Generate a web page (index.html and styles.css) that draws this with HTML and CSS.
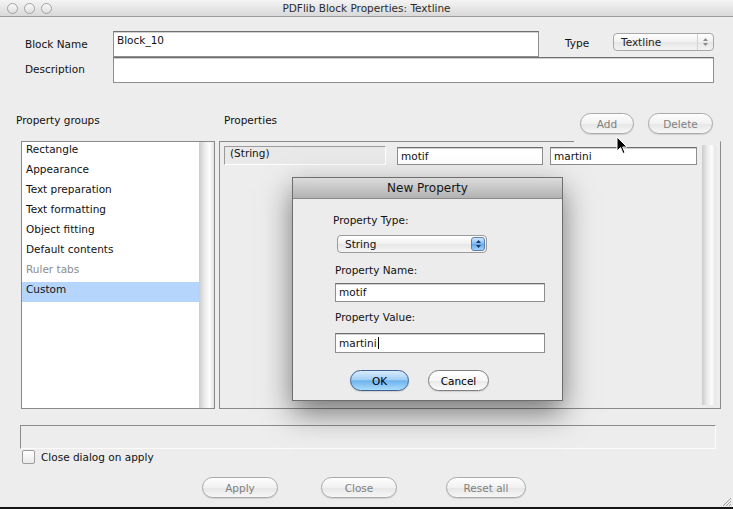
FILE: index.html
```html
<!DOCTYPE html>
<html lang="en">
<head>
  <meta charset="UTF-8">
  <title>PDFlib Block Properties: Textline</title>
  <link rel="stylesheet" href="styles.css">
</head>
<body>
  <div class="window">
    <div class="titlebar">
      <div class="lights">
        <span class="light"></span>
        <span class="light"></span>
        <span class="light"></span>
      </div>
      <div class="title">PDFlib Block Properties: Textline</div>
    </div>

    <div class="form">
      <div class="form-row">
        <label class="form-label">Block Name</label>
        <div class="field field-name">Block_10</div>
        <label class="form-label type-label">Type</label>
        <div class="popup">
          <span>Textline</span>
          <span class="popup-arrows">
            <svg width="7" height="10" viewBox="0 0 7 10"><path d="M3.5 1 L6 4 H1 Z M3.5 9 L6 6 H1 Z" fill="#8a8a8a"/></svg>
          </span>
        </div>
      </div>
      <div class="form-row">
        <label class="form-label desc-label">Description</label>
        <div class="field field-desc"></div>
      </div>
    </div>

    <div class="main">
      <div class="groups">
        <div class="section-label">Property groups</div>
        <div class="list">
          <div class="list-items">
            <div class="list-item">Rectangle</div>
            <div class="list-item">Appearance</div>
            <div class="list-item">Text preparation</div>
            <div class="list-item">Text formatting</div>
            <div class="list-item">Object fitting</div>
            <div class="list-item">Default contents</div>
            <div class="list-item disabled">Ruler tabs</div>
            <div class="list-item selected">Custom</div>
          </div>
          <div class="vscroll"></div>
        </div>
      </div>

      <div class="properties">
        <div class="props-header">
          <div class="section-label">Properties</div>
          <div class="props-buttons">
            <button class="pill add-button">Add</button>
            <button class="pill delete-button">Delete</button>
          </div>
        </div>
        <div class="props-panel">
          <div class="props-rows">
            <div class="prop-row">
              <div class="prop-type">(String)</div>
              <div class="field prop-name">motif</div>
              <div class="field prop-value">martini</div>
            </div>
          </div>
          <div class="vscroll props-scroll"></div>
        </div>
      </div>
    </div>

    <div class="status"></div>

    <div class="check-row">
      <span class="checkbox"></span>
      <span>Close dialog on apply</span>
    </div>

    <div class="footer">
      <button class="pill apply-button">Apply</button>
      <button class="pill close-button">Close</button>
      <button class="pill reset-button">Reset all</button>
    </div>

    <div class="dialog">
      <div class="dialog-title">New Property</div>
      <div class="dialog-body">
        <div class="dialog-label">Property Type:</div>
        <div class="dialog-popup">
          <span>String</span>
          <span class="blue-arrows">
            <svg width="7" height="10" viewBox="0 0 7 10"><path d="M3.5 1 L6 4 H1 Z M3.5 9 L6 6 H1 Z" fill="#1d3b66"/></svg>
          </span>
        </div>
        <div class="dialog-label name-label">Property Name:</div>
        <div class="field dialog-field name-field">motif</div>
        <div class="dialog-label value-label">Property Value:</div>
        <div class="field dialog-field value-field">martini<span class="caret"></span></div>
        <div class="dialog-buttons">
          <button class="pill ok-button">OK</button>
          <button class="pill cancel-button">Cancel</button>
        </div>
      </div>
    </div>

    <svg class="cursor" width="12" height="19" viewBox="0 0 12 19">
      <path d="M1 1 L1 15 L4.5 11.5 L7 17.5 L9 16.6 L6.6 11 L11 11 Z" fill="#000" stroke="#fff" stroke-width="1"/>
    </svg>

    <svg class="grip" width="9" height="9" viewBox="0 0 9 9">
      <path d="M1 9 L9 1 M4 9 L9 4 M7 9 L9 7" stroke="#a0a0a0" stroke-width="1"/>
    </svg>
  </div>
</body>
</html>
```

FILE: styles.css
```css
* {
  box-sizing: border-box;
}

body {
  margin: 0;
  background-color: #161616;
  font-family: "DejaVu Sans", Verdana, sans-serif;
  font-size: 10.5px;
  color: #111;
}

.window {
  position: relative;
  width: 733px;
  height: 507px;
  background-color: #ededed;
  overflow: hidden;
}

.titlebar {
  display: grid;
  grid-template-columns: 1fr auto 1fr;
  align-items: center;
  height: 17px;
  background: linear-gradient(#f4f4f4, #d9d9d9);
  border-bottom: 1px solid #9c9c9c;
}

.lights {
  display: flex;
  gap: 6px;
  padding-left: 7px;
}

.light {
  width: 11px;
  height: 11px;
  border-radius: 50%;
  border: 1px solid #a2a2a2;
  background: linear-gradient(#fafafa, #dedede);
}

.title {
  font-size: 10.5px;
  color: #2b2b2b;
}

.form {
  padding: 14px 0 0 25px;
}

.form-row {
  display: flex;
  align-items: center;
}

.form-label {
  width: 88px;
}

.desc-label {
  padding-bottom: 3px;
}

.field {
  background-color: #fff;
  border: 1px solid #8e8e8e;
  border-top-color: #6f6f6f;
  box-shadow: inset 0 1px 0 #d0d0d0;
  padding: 1px 3px;
  line-height: 14px;
}

.field-name {
  width: 426px;
  height: 26px;
}

.field-desc {
  width: 601px;
  height: 26px;
}

.type-label {
  width: 48px;
  margin-left: 26px;
  padding-bottom: 2px;
}

.popup {
  display: flex;
  justify-content: space-between;
  align-items: center;
  align-self: flex-start;
  width: 101px;
  height: 18px;
  margin-top: 2px;
  padding-left: 7px;
  border: 1px solid #a7a7a7;
  border-radius: 4px;
  background: linear-gradient(#ffffff, #f0f0f0 50%, #e6e6e6 51%, #f3f3f3);
  color: #222;
}

.popup-arrows {
  display: flex;
  align-items: center;
  justify-content: center;
  width: 16px;
  height: 100%;
  border-left: 1px solid #d0d0d0;
}

.main {
  display: flex;
  gap: 4px;
  margin-top: 30px;
  padding-left: 16px;
}

.groups {
  width: 199px;
}

.section-label {
  line-height: 14px;
  height: 28px;
}

.list {
  display: flex;
  width: 194px;
  height: 268px;
  margin-left: 5px;
  border: 1px solid #8a8a8a;
}

.list-items {
  flex: 1;
  background-color: #fff;
}

.list-item {
  height: 20px;
  line-height: 14px;
  padding-left: 4px;
}

.list-item.disabled {
  color: #8c8c8c;
}

.list-item.selected {
  background-color: #b6d5fd;
}

.vscroll {
  width: 15px;
  background: linear-gradient(to right, #cbcbcb, #e9e9e9 35%, #fdfdfd 70%, #e2e2e2);
}

.properties {
  width: 502px;
}

.props-header {
  display: flex;
  justify-content: space-between;
  align-items: flex-start;
  height: 28px;
  padding: 0 8px 0 5px;
}

.props-buttons {
  display: flex;
  gap: 14px;
}

.pill {
  height: 21px;
  padding: 0;
  border: 1px solid #a9a9a9;
  border-radius: 11px;
  background: linear-gradient(#fefefe, #f1f1f1 50%, #e7e7e7 55%, #f6f6f6);
  box-shadow: 0 1px 1px rgba(0, 0, 0, 0.12);
  font-family: inherit;
  font-size: 10.5px;
  color: #808080;
}

.add-button {
  width: 54px;
}

.delete-button {
  width: 65px;
}

.props-panel {
  position: relative;
  display: flex;
  height: 268px;
  border: 1px solid #8a8a8a;
  border-top-color: transparent;
  padding: 3px 4px 3px 4px;
}

.props-panel::before {
  content: "";
  position: absolute;
  top: -1px;
  left: -1px;
  width: 355px;
  border-top: 1px solid #8a8a8a;
}

.props-rows {
  flex: 1;
}

.prop-row {
  display: flex;
  margin-top: 1px;
}

.prop-type {
  width: 162px;
  height: 19px;
  padding: 0 5px;
  line-height: 12px;
  background-color: #e9e9e9;
  border: 1px solid #9a9a9a;
  border-right-color: #fff;
  border-bottom-color: #fff;
}

.prop-name {
  width: 146px;
  height: 18px;
  margin-left: 11px;
  margin-top: 1px;
}

.prop-value {
  width: 147px;
  height: 18px;
  margin-left: 7px;
  margin-top: 1px;
}

.props-scroll {
  margin-left: 5px;
}

.status {
  width: 696px;
  height: 24px;
  margin: 16px 0 0 20px;
  border: 1px solid #8c8c8c;
  border-right-color: #fbfbfb;
  border-bottom-color: #fbfbfb;
}

.check-row {
  display: flex;
  align-items: center;
  gap: 6px;
  margin: 1px 0 0 22px;
  height: 14px;
}

.checkbox {
  width: 13px;
  height: 14px;
  border: 1px solid #9d9d9d;
  border-radius: 2px;
  background: linear-gradient(#ffffff, #e9e9e9);
}

.footer {
  display: flex;
  margin-top: 13px;
  padding-left: 202px;
}

.apply-button {
  width: 76px;
}

.close-button {
  width: 76px;
  margin-left: 43px;
}

.reset-button {
  width: 80px;
  margin-left: 49px;
}

.dialog {
  position: absolute;
  left: 292px;
  top: 177px;
  width: 271px;
  height: 224px;
  background-color: #ececec;
  border: 1px solid #6e6e6e;
  box-shadow: 0 12px 28px rgba(0, 0, 0, 0.5);
}

.dialog-title {
  height: 21px;
  line-height: 21px;
  text-align: center;
  font-size: 12px;
  color: #161616;
  background: linear-gradient(#dcdcdc, #b2b2b2);
  border-bottom: 1px solid #8a8a8a;
}

.dialog-body {
  display: flex;
  flex-direction: column;
  align-items: flex-start;
  padding: 14px 0 0 40px;
}

.dialog-label {
  line-height: 14px;
}

.dialog-popup {
  display: flex;
  justify-content: space-between;
  align-items: center;
  width: 150px;
  height: 18px;
  margin: 8px 0 0 4px;
  padding: 0 1px 0 7px;
  border: 1px solid #9a9a9a;
  border-radius: 4px;
  background: linear-gradient(#ffffff, #f0f0f0 50%, #e6e6e6 51%, #f5f5f5);
}

.blue-arrows {
  display: flex;
  align-items: center;
  justify-content: center;
  width: 14px;
  height: 14px;
  border-radius: 3px;
  background: linear-gradient(#cfe6fb, #7fbaf0 50%, #5ea7ec 51%, #a6d4f8);
  border: 1px solid #5a7fb0;
}

.name-label {
  margin: 10px 0 0 2px;
}

.dialog-field {
  width: 210px;
  margin-left: 2px;
}

.name-field {
  height: 19px;
  margin-top: 6px;
}

.value-label {
  margin: 8px 0 0 2px;
}

.value-field {
  height: 20px;
  margin-top: 9px;
  padding-top: 2px;
}

.caret {
  display: inline-block;
  width: 1px;
  height: 12px;
  margin-left: 1px;
  vertical-align: -2px;
  background-color: #000;
}

.dialog-buttons {
  display: flex;
  gap: 19px;
  margin: 17px 0 0 17px;
}

.ok-button {
  width: 59px;
  border-color: #3f5f93;
  background: linear-gradient(#d8ecfd, #a3cff5 45%, #6eb2ee 52%, #a9dcfb);
  color: #000;
}

.cancel-button {
  width: 61px;
  border-color: #7e7e7e;
  background: linear-gradient(#ffffff, #f6f6f6 50%, #eaeaea 55%, #fbfbfb);
  color: #000;
}

.cursor {
  position: absolute;
  left: 616px;
  top: 136px;
}

.grip {
  position: absolute;
  right: 2px;
  bottom: 1px;
}
```
